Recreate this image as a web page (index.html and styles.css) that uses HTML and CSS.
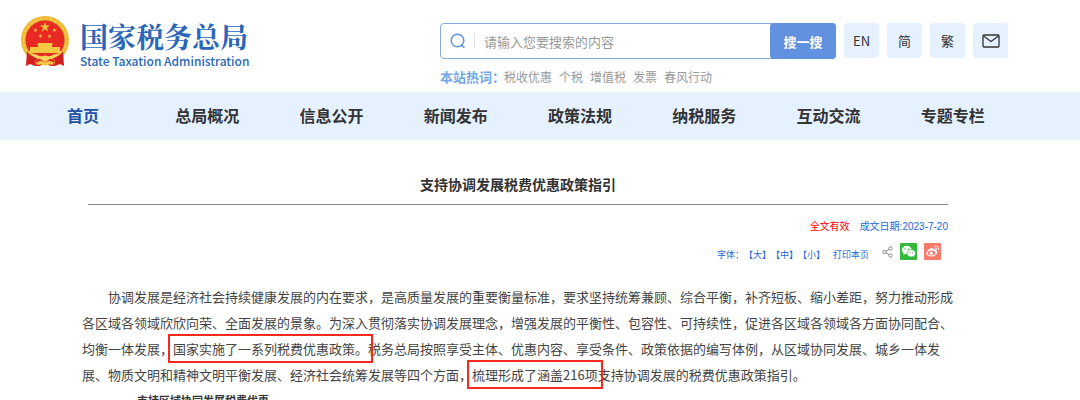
FILE: index.html
```
<!DOCTYPE html>
<html lang="zh-CN">

<head>
  <meta charset="UTF-8">
  <meta name="viewport" content="width=device-width, initial-scale=1.0">
  <title>支持协调发展税费优惠政策指引</title>
  <link rel="stylesheet" href="styles.css">
</head>

<body>

  <header class="header">
    <a class="logo" href="#">
      <svg class="emblem" viewBox="0 0 50 52" aria-hidden="true">
        <circle cx="25" cy="25" r="24" fill="#efb832"/>
        <circle cx="25" cy="25" r="21.500" fill="none" stroke="#f6cb4c" stroke-width="2" stroke-dasharray="3 2"/>
        <circle cx="25" cy="25" r="19.500" fill="#e92a24"/>
        <path d="M25 7 l1.200 3.500 h3.800 l-3 2.300 1.100 3.600 -3.100 -2.200 -3.100 2.200 1.100 -3.600 -3 -2.300 h3.800z" fill="#f6c842"/>
        <path id="star" d="M15.500 13 l.6 1.500 h1.500 l-1.200 1 .4 1.500 -1.300 -.9 -1.300 .9 .4 -1.500 -1.200 -1 h1.500z" fill="#f6c842"/>
        <use href="#star" x="5" y="6"/>
        <use href="#star" x="14" y="6"/>
        <use href="#star" x="19" y="0"/>
        <path d="M18 28 h14 l1 2 h-1 v2 h8 v4 h2 v2 H8 v-2 h2 v-4 h8 v-2 h-1z" fill="#f6c842"/>
        <path d="M9 41 H41 L36 50 H14 Z" fill="#efb832"/>
        <path d="M7 36 Q9 41 18 43 L15 46 V51 L10 49 L6 51 Z M43 36 Q41 41 32 43 L35 46 V51 L40 49 L44 51 Z" fill="#d3201f"/>
        <path d="M16 45 L21 43 L24 47 L20 51 H15 Z M34 45 L29 43 L26 47 L30 51 H35 Z" fill="#e02a22"/>
        <path d="M10 38 Q17 39 21 42 Q25 39 29 42 Q33 39 40 38 Q37 43 30 44 Q25 48 20 44 Q13 43 10 38 Z" fill="#f8d45c"/>
        <path d="M16 48 Q21 44 25 48 Q29 44 34 48 L32 50 Q28 48 25 51 Q22 48 18 50 Z" fill="#f6c842"/>
      </svg>
      <span class="logo-text">
        <strong class="logo-name">国家税务总局</strong>
        <span class="logo-en">State Taxation Administration</span>
      </span>
    </a>

    <div class="header-right">
      <div class="tools">
        <form class="search">
          <label class="search-label" for="keyword" aria-label="搜索">
            <svg width="16" height="16" viewBox="0 0 16 16" fill="none" stroke="#5b95dc" stroke-width="1.500">
              <circle cx="7.500" cy="7.500" r="6.300"/>
              <path d="M11 11.500 L14.500 15"/>
            </svg>
          </label>
          <input class="search-input" id="keyword" type="text" placeholder="请输入您要搜索的内容">
          <button class="search-button" type="button">搜一搜</button>
        </form>
        <a class="tool" href="#">EN</a>
        <a class="tool" href="#">简</a>
        <a class="tool" href="#">繁</a>
        <a class="tool" href="#" aria-label="邮箱">
          <svg class="mail" width="18" height="14" viewBox="0 0 18 14" fill="none" stroke="#333" stroke-width="1.300">
            <rect x="1" y="1" width="16" height="12" rx="1"/>
            <path d="M1.500 2 L9 7.500 L16.500 2"/>
          </svg>
        </a>
      </div>
      <div class="hot">
        <strong class="hot-title">本站热词：</strong>
        <a href="#">税收优惠</a>
        <a href="#">个税</a>
        <a href="#">增值税</a>
        <a href="#">发票</a>
        <a href="#">春风行动</a>
      </div>
    </div>
  </header>

  <nav class="nav">
    <a class="active" href="#">首页</a>
    <a href="#">总局概况</a>
    <a href="#">信息公开</a>
    <a href="#">新闻发布</a>
    <a href="#">政策法规</a>
    <a href="#">纳税服务</a>
    <a href="#">互动交流</a>
    <a href="#">专题专栏</a>
  </nav>

  <main class="main">
    <article class="article">
      <div class="article-head">
        <h1>支持协调发展税费优惠政策指引</h1>
        <div class="meta">
          <span class="valid">全文有效</span>
          <span>成文日期:2023-7-20</span>
        </div>
        <div class="actions">
          <div class="font-size">
            <span>字体：</span><button type="button">【大】</button><button type="button">【中】</button><button type="button">【小】</button>
          </div>
          <button type="button">打印本页</button>
          <div class="share">
            <a href="#" aria-label="分享">
              <svg width="11" height="12" viewBox="0 0 11 12" fill="none" stroke="#888">
                <circle cx="2.500" cy="6" r="1.700"/>
                <circle cx="8.500" cy="2.500" r="1.700"/>
                <circle cx="8.500" cy="9.500" r="1.700"/>
                <path d="M4 5.200 L7 3.400 M4 6.800 L7 8.600"/>
              </svg>
            </a>
            <a href="#" aria-label="微信">
              <svg width="17" height="17" viewBox="0 0 17 17">
                <rect width="17" height="17" rx="1" fill="#32b83a"/>
                <path d="M3.500 10.500 L3.200 12 L5 11.200 Z M13 13 L14.300 14 L14.200 12 Z" fill="#fff"/>
                <ellipse cx="6.800" cy="7" rx="4.900" ry="4.200" fill="#fff"/>
                <ellipse cx="11.300" cy="10.300" rx="4.300" ry="3.600" fill="#fff" stroke="#32b83a" stroke-width=".7"/>
                <g fill="#32b83a">
                  <circle cx="5" cy="6" r=".7"/>
                  <circle cx="8.300" cy="6" r=".7"/>
                  <circle cx="9.900" cy="9.500" r=".6"/>
                  <circle cx="12.700" cy="9.500" r=".6"/>
                </g>
              </svg>
            </a>
            <a href="#" aria-label="微博">
              <svg width="17" height="17" viewBox="0 0 17 17">
                <rect width="17" height="17" rx="1" fill="#f77a6b"/>
                <path d="M7.500 5 Q9 4.300 9.200 6.300 Q12 5.300 11.800 7.300 Q14 8 13 10.300 Q11.500 13.500 7.500 13.500 Q2.500 13.300 2.300 10.300 Q3 7 7.500 5Z" fill="#fff"/>
                <ellipse cx="7.500" cy="10" rx="3.800" ry="2.500" fill="#f77a6b"/>
                <circle cx="7.200" cy="10.200" r="1.600" fill="#fff"/>
                <path d="M10.500 3.300 Q14.800 2.500 14.500 7 M10.800 5 Q13 4.800 12.800 6.800" fill="none" stroke="#fff"/>
              </svg>
            </a>
          </div>
        </div>
      </div>

      <p class="intro">协调发展是经济社会持续健康发展的内在要求，是高质量发展的重要衡量标准，要求坚持统筹兼顾、综合平衡，补齐短板、缩小差距，努力推动形成各区域各领域欣欣向荣、全面发展的景象。为深入贯彻落实协调发展理念，增强发展的平衡性、包容性、可持续性，促进各区域各领域各方面协同配合、均衡一体发展，<mark>国家实施了一系列税费优惠政策。</mark>税务总局按照享受主体、优惠内容、享受条件、政策依据的编写体例，从区域协同发展、城乡一体发展、物质文明和精神文明平衡发展、经济社会统筹发展等四个方面，<mark>梳理形成了涵盖216项</mark>支持协调发展的税费优惠政策指引。</p>
      <h2>支持区域协同发展税费优惠</h2>
    </article>
  </main>

</body>

</html>
```
FILE: styles.css
```
* {
  box-sizing: border-box;
}

body {
  margin: 0;
  font-family: "Noto Sans CJK SC", sans-serif;
  font-size: 12px;
  color: #333;
  background: #fff;
}

a {
  color: inherit;
  text-decoration: none;
}

button {
  padding: 0;
  border: 0;
  background: none;
  color: inherit;
  font: inherit;
  cursor: pointer;
}

.header {
  display: flex;
  justify-content: space-between;
  align-items: flex-start;
  height: 92px;
  padding: 0 72px 0 20px;
}

.logo {
  display: flex;
  gap: 10px;
  padding-top: 15px;
  color: #2b67b9;
}

.emblem {
  width: 50px;
  height: 52px;
}

.logo-text {
  display: flex;
  flex-direction: column;
  padding-top: 3px;
}

.logo-name {
  font-family: "Noto Serif CJK SC", "Noto Sans CJK SC", serif;
  font-size: 28px;
  line-height: 36px;
}

.logo-en {
  font-size: 12px;
  font-weight: 500;
  line-height: 14px;
}

.header-right {
  width: 58%;
  max-width: 568px;
  padding-top: 23px;
}

.tools {
  display: flex;
  gap: 8px;
}

.search {
  display: flex;
  flex: 1;
  height: 36px;
  border: 1px solid #88a9dc;
  border-radius: 4px;
}

.search-label {
  display: flex;
  align-items: center;
  margin: 9px 0;
  padding: 0 8px 0 9px;
  border-right: 1px solid #ddd;
}

.search-input {
  flex: 1;
  min-width: 0;
  padding: 0 9px;
  border: 0;
  outline: 0;
  background: none;
  font: inherit;
  font-size: 13px;
}

.search-input::placeholder {
  color: #999;
}

.search-button {
  width: 66px;
  margin: -1px;
  border-radius: 4px;
  background: #6191df;
  color: #fff;
  font-size: 13px;
  font-weight: bold;
}

.tool {
  display: flex;
  justify-content: center;
  align-items: center;
  width: 35px;
  height: 35px;
  border-radius: 4px;
  background: #e5f1ff;
  font-size: 13px;
}

.hot {
  display: flex;
  align-items: center;
  gap: 7px;
  margin-top: 8px;
  line-height: 20px;
  color: #999;
}

.hot-title {
  margin-right: -8px;
  color: #74a6e2;
  font-size: 13px;
}

.nav {
  display: flex;
  padding: 0 65px 2px 21px;
  background: #e5f1ff;
  font-size: 16px;
  font-weight: bold;
  line-height: 46px;
}

.nav a {
  flex: 1;
  text-align: center;
}

.nav .active {
  color: #2451a5;
}

.main {
  padding-right: 44px;
}

.article {
  max-width: 872px;
  margin: 0 auto;
}

.article-head {
  margin: 0 6px;
}

h1 {
  margin: 0;
  padding: 32px 0 8px;
  border-bottom: 1px solid #888;
  font-size: 14px;
  line-height: 24px;
  text-align: center;
}

.meta {
  display: flex;
  justify-content: flex-end;
  gap: 10px;
  margin-top: 14px;
  font-family: "Liberation Sans", "Noto Sans CJK SC", sans-serif;
  font-size: 10px;
  line-height: 16px;
  color: #1f66d6;
}

.valid {
  color: #f00;
}

.actions {
  display: flex;
  justify-content: flex-end;
  align-items: flex-end;
  gap: 8px;
  height: 18px;
  margin: 8px 7px 0 0;
  font-size: 9px;
  color: #1f66d6;
}

.font-size {
  display: flex;
}

.share {
  display: flex;
  align-items: center;
  gap: 7px;
  padding: 0 0 1px 5px;
}

.share a {
  display: flex;
}

.intro {
  margin: 23px 0 0;
  color: #444;
  font-size: 13px;
  line-height: 26px;
  text-indent: 2em;
}

mark {
  background: none;
  color: inherit;
  outline: 2px solid #f5291d;
  outline-offset: 3px;
}

h2 {
  margin: 0;
  padding-left: 55px;
  font-size: 11px;
  line-height: 24px;
}
```
